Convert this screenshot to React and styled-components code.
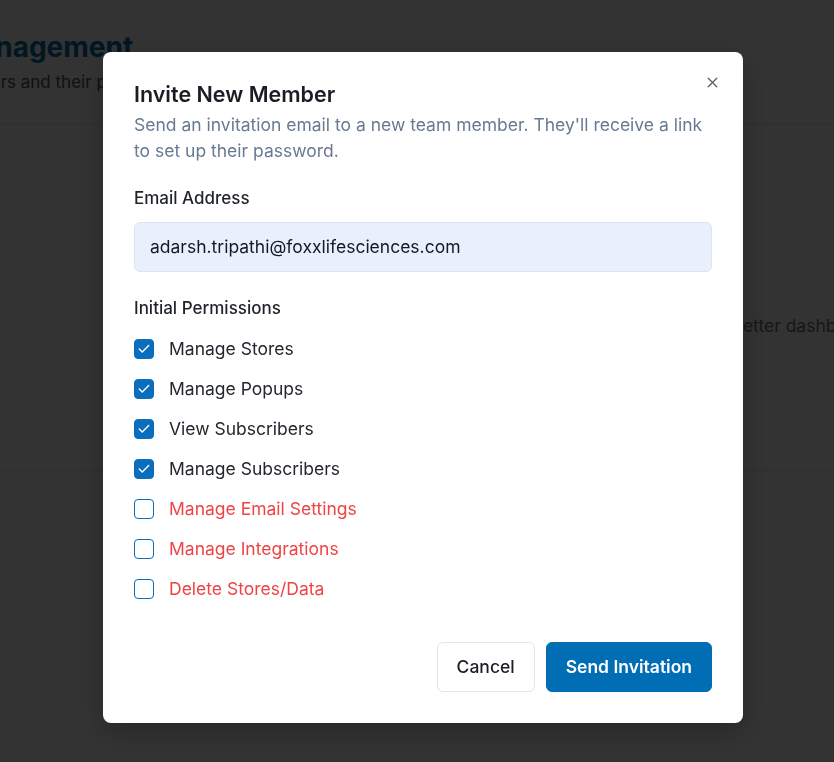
import React, {useState} from 'react';
import styled, {createGlobalStyle} from 'styled-components';

const GlobalStyle = createGlobalStyle`
  html, body {
    margin: 0;
    padding: 0;
    background: #ffffff;
    font-family: Inter, "Noto Sans", sans-serif;
    overflow: hidden;
  }
  * { box-sizing: border-box; }
`;

const permissionsList = [
    {key: 'stores', label: 'Manage Stores', checked: true},
    {key: 'popups', label: 'Manage Popups', checked: true},
    {key: 'viewSubs', label: 'View Subscribers', checked: true},
    {key: 'manageSubs', label: 'Manage Subscribers', checked: true},
    {key: 'email', label: 'Manage Email Settings', checked: false, danger: true},
    {key: 'integrations', label: 'Manage Integrations', checked: false, danger: true},
    {key: 'delete', label: 'Delete Stores/Data', checked: false, danger: true}
];

const CheckIcon = () => (
    <svg width="14" height="14" viewBox="0 0 24 24" fill="none" stroke="#fff" strokeWidth="2.3" strokeLinecap="round" strokeLinejoin="round">
        <polyline points="20 6 9 17 4 12"/>
    </svg>
);

const CloseIcon = () => (
    <svg width="17" height="17" viewBox="0 0 24 24" fill="none" stroke="#3f4650" strokeWidth="1.9" strokeLinecap="round">
        <path d="M18 6 6 18M6 6l12 12"/>
    </svg>
);

export default function App() {
    const [perms, setPerms] = useState(
        Object.fromEntries(permissionsList.map(p => [p.key, p.checked]))
    );

    return (
        <>
            <GlobalStyle/>
            <Page>
                <PageHeader>
                    <PageTitle>Team Management</PageTitle>
                    <PageSubtitle>Manage members and their permissions</PageSubtitle>
                </PageHeader>
                <PageBody>
                    <EmptyText>Invite teammates to help run your newsletter dashboard</EmptyText>
                </PageBody>
            </Page>

            <Overlay>
                <Modal>
                    <CloseButton aria-label="Close"><CloseIcon/></CloseButton>
                    <Title>Invite New Member</Title>
                    <Description>
                        Send an invitation email to a new team member. They'll receive a link to set up their password.
                    </Description>

                    <Field>
                        <Label>Email Address</Label>
                        <Input defaultValue="adarsh.tripathi@foxxlifesciences.com"/>
                    </Field>

                    <Field $gap={24}>
                        <Label>Initial Permissions</Label>
                        <CheckList>
                            {permissionsList.map(p => (
                                <CheckRow key={p.key} onClick={() => setPerms({...perms, [p.key]: !perms[p.key]})}>
                                    <Box $checked={perms[p.key]}>{perms[p.key] && <CheckIcon/>}</Box>
                                    <CheckLabel $danger={p.danger}>{p.label}</CheckLabel>
                                </CheckRow>
                            ))}
                        </CheckList>
                    </Field>

                    <Footer>
                        <Button>Cancel</Button>
                        <Button $primary>Send Invitation</Button>
                    </Footer>
                </Modal>
            </Overlay>
        </>
    );
}

const Page = styled.div`
  height: 100vh;
  display: flex;
  flex-direction: column;
  margin-left: -161px;
  width: calc(100vw + 161px);
`;

const PageHeader = styled.header`
  padding: 28px 32px 30px;
  border-bottom: 1px solid #e5e7eb;
`;

const PageTitle = styled.h1`
  margin: 0;
  font-size: 28px;
  line-height: 38px;
  font-weight: 700;
  color: #0a6ab0;
`;

const PageSubtitle = styled.p`
  margin: 4px 0 0;
  font-size: 17px;
  line-height: 24px;
  color: #4b5563;
`;

const PageBody = styled.div`
  height: 346px;
  display: flex;
  align-items: flex-start;
  justify-content: flex-end;
  padding-top: 189px;
  border-bottom: 1px solid #e5e7eb;
`;

const EmptyText = styled.p`
  margin: 0 -40px 0 0;
  white-space: nowrap;
  font-size: 17.5px;
  line-height: 24px;
  color: #6b7280;
`;

const Overlay = styled.div`
  position: fixed;
  inset: 0;
  background: rgba(0, 0, 0, 0.8);
  display: flex;
  align-items: center;
  justify-content: center;
  padding: 12px 0 0 12px;
`;

const Modal = styled.div`
  position: relative;
  width: 640px;
  background: #ffffff;
  border-radius: 8px;
  padding: 27px 31px 31px;
  box-shadow: 0 10px 30px rgba(0, 0, 0, 0.25);
`;

const CloseButton = styled.button`
  position: absolute;
  top: 21px;
  right: 21px;
  width: 20px;
  height: 20px;
  padding: 0;
  border: none;
  background: none;
  display: flex;
  align-items: center;
  justify-content: center;
  cursor: pointer;
  opacity: 0.85;
`;

const Title = styled.h2`
  margin: 0;
  font-size: 21.5px;
  line-height: 30px;
  font-weight: 600;
  color: #1a1d23;
`;

const Description = styled.p`
  margin: 3px 0 0;
  font-size: 17.5px;
  line-height: 26px;
  color: #687a91;
`;

const Field = styled.div`
  margin-top: ${p => p.$gap || 22}px;
  display: flex;
  flex-direction: column;
`;

const Label = styled.label`
  font-size: 17px;
  line-height: 24px;
  font-weight: 500;
  color: #1f232a;
  margin-bottom: 12px;
`;

const Input = styled.input`
  height: 50px;
  border: 1px solid #dde4ee;
  border-radius: 6px;
  background: #e8f0fe;
  padding: 0 15px;
  font-family: inherit;
  font-size: 17.5px;
  color: #16191f;
  outline: none;
`;

const CheckList = styled.div`
  display: flex;
  flex-direction: column;
  gap: 16px;
  margin-top: 5px;
`;

const CheckRow = styled.div`
  display: flex;
  align-items: center;
  gap: 15px;
  height: 24px;
  cursor: pointer;
`;

const Box = styled.span`
  width: 20px;
  height: 20px;
  border-radius: 4px;
  display: flex;
  align-items: center;
  justify-content: center;
  background: ${p => (p.$checked ? '#0a6ebd' : '#ffffff')};
  border: 1.5px solid #0a6ebd;
`;

const CheckLabel = styled.span`
  font-size: 17.5px;
  line-height: 24px;
  color: ${p => (p.$danger ? '#ef4444' : '#23272e')};
`;

const Footer = styled.div`
  margin-top: 41px;
  display: flex;
  justify-content: flex-end;
  gap: 11px;
`;

const Button = styled.button`
  height: 50px;
  padding: 0 19px;
  border-radius: 6px;
  font-family: inherit;
  font-size: 17.5px;
  font-weight: ${p => (p.$primary ? 600 : 500)};
  cursor: pointer;
  border: 1px solid ${p => (p.$primary ? '#006db5' : '#e2e6ec')};
  background: ${p => (p.$primary ? '#006db5' : '#ffffff')};
  color: ${p => (p.$primary ? '#ffffff' : '#1b1e24')};
`;
